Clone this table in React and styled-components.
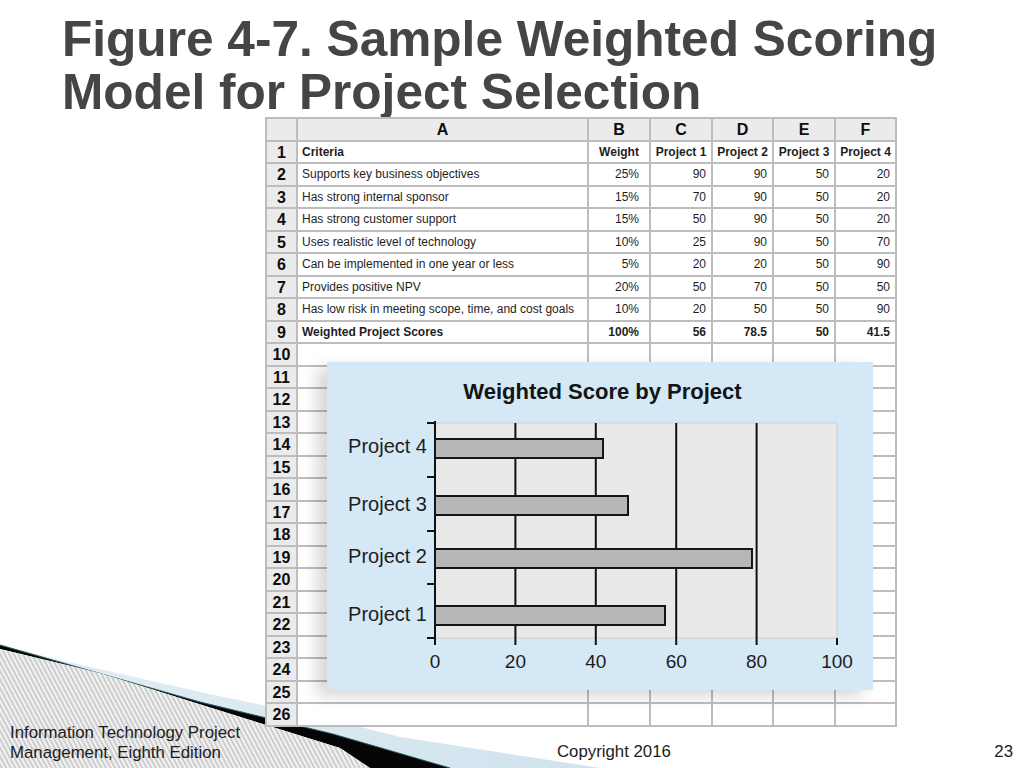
import React from "react";
import styled, { createGlobalStyle } from "styled-components";

const GlobalStyle = createGlobalStyle`
  html, body {
    margin: 0;
    padding: 0;
    background: #fff;
  }
  body {
    font-family: "Liberation Sans", Arial, sans-serif;
  }
`;

const Page = styled.div`
  position: relative;
  width: 1024px;
  height: 768px;
  overflow: hidden;
  background: #fff;
  display: grid;
  grid-template-columns: 265px 1fr;
  grid-template-rows: 117px 610px 1fr;
`;

const Deco = styled.svg`
  position: absolute;
  left: 0;
  bottom: 0;
  z-index: 0;
`;

const Title = styled.h1`
  grid-column: 1 / -1;
  grid-row: 1;
  position: relative;
  z-index: 1;
  margin: 0;
  padding: 13px 62px 0;
  font-size: 49.6px;
  line-height: 53px;
  font-weight: 700;
  color: #454545;
`;

const SheetArea = styled.div`
  grid-column: 2;
  grid-row: 2;
  position: relative;
  z-index: 2;
  align-self: start;
  justify-self: start;
`;

const Sheet = styled.div`
  display: grid;
  grid-template-columns: 29px 289px 60px 60px 59px 60px 59px;
  grid-auto-rows: 20.5px;
  gap: 2px;
  padding: 2px;
  background: #bdbdbd;
`;

const Cell = styled.div`
  background: #fff;
  color: #1e1e1e;
  font-size: 12px;
  line-height: 20.5px;
  font-weight: ${(p) => (p.$bold ? 700 : 400)};
  text-align: ${(p) => p.$align || "left"};
  padding: 0 ${(p) => (p.$right ?? 4)}px 0 ${(p) => (p.$left ?? 4)}px;
  white-space: nowrap;
  overflow: hidden;
`;

const HeadCell = styled.div`
  background: #ebebeb;
  color: #0e0e0e;
  font-size: 16px;
  font-weight: 700;
  line-height: 21px;
  text-align: center;
`;

const ChartPanel = styled.div`
  position: absolute;
  left: 62px;
  top: 245px;
  width: 546px;
  height: 328px;
  background: #d5e8f6;
  box-shadow: -10px 6px 14px rgba(0, 0, 0, 0.16);
  display: flex;
  flex-direction: column;
`;

const ChartTitle = styled.div`
  padding: 18px 0 0 5px;
  font-size: 22px;
  line-height: 24px;
  font-weight: 700;
  color: #141414;
  text-align: center;
`;

const LeftFooter = styled.div`
  grid-column: 1;
  grid-row: 2 / 4;
  align-self: end;
  position: relative;
  z-index: 1;
  padding: 0 0 5px 10px;
  font-size: 16.8px;
  line-height: 20px;
  color: #1c1c1c;
`;

const BottomBar = styled.div`
  grid-column: 2;
  grid-row: 3;
  position: relative;
  z-index: 1;
  display: flex;
  justify-content: space-between;
  align-items: flex-end;
  padding: 0 11px 6px 292px;
  font-size: 16.8px;
  line-height: 20px;
  color: #1c1c1c;
`;

const letters = ["A", "B", "C", "D", "E", "F"];

const criteria = [
  ["Supports key business objectives", "25%", 90, 90, 50, 20],
  ["Has strong internal sponsor", "15%", 70, 90, 50, 20],
  ["Has strong customer support", "15%", 50, 90, 50, 20],
  ["Uses realistic level of technology", "10%", 25, 90, 50, 70],
  ["Can be implemented in one year or less", "5%", 20, 20, 50, 90],
  ["Provides positive NPV", "20%", 50, 70, 50, 50],
  ["Has low risk in meeting scope, time, and cost goals", "10%", 20, 50, 50, 90],
];

const totals = ["Weighted Project Scores", "100%", 56, 78.5, 50, 41.5];

const DataRow = ({ n, values, bold }) => (
  <>
    <HeadCell>{n}</HeadCell>
    <Cell $bold={bold}>{values[0]}</Cell>
    <Cell $bold={bold} $align="right" $right={10}>
      {values[1]}
    </Cell>
    {values.slice(2).map((v, i) => (
      <Cell key={i} $bold={bold} $align="right" $right={5}>
        {v}
      </Cell>
    ))}
  </>
);

const EmptyRow = ({ n }) => (
  <>
    <HeadCell>{n}</HeadCell>
    {letters.map((l) => (
      <Cell key={l} />
    ))}
  </>
);

// chart coords are relative to the svg, which starts at (327, 404) on the page
const bars = [
  { label: "Project 4", top: 35, width: 168, base: 49 },
  { label: "Project 3", top: 92, width: 193, base: 107 },
  { label: "Project 2", top: 145, width: 317, base: 159 },
  { label: "Project 1", top: 202, width: 230, base: 217 },
];

const Chart = () => {
  const x0 = 108;
  const unit = 4.02;
  const top = 19;
  const bottom = 234;
  const ticksY = [19, 73, 127, 180, 234];
  return (
    <ChartPanel>
      <ChartTitle>Weighted Score by Project</ChartTitle>
      <svg width="546" height="286" viewBox="0 0 546 286">
        <rect x={x0} y={top} width={402} height={bottom - top} fill="#e9e9e9" stroke="#cfcfcf" strokeWidth="1" />
        {[20, 40, 60, 80].map((v) => (
          <line key={v} x1={x0 + v * unit} x2={x0 + v * unit} y1={top} y2={bottom + 7} stroke="#111" strokeWidth="2" />
        ))}
        <line x1={x0 + 100 * unit} x2={x0 + 100 * unit} y1={bottom} y2={bottom + 7} stroke="#111" strokeWidth="2" />
        <line x1={x0} x2={x0} y1={top - 2} y2={bottom + 7} stroke="#111" strokeWidth="2" />
        {ticksY.map((y) => (
          <line key={y} x1={x0 - 8} x2={x0} y1={y} y2={y} stroke="#111" strokeWidth="2" />
        ))}
        {bars.map((b) => (
          <g key={b.label}>
            <rect x={x0} y={b.top} width={b.width} height={19} fill="#b7b7b7" stroke="#151515" strokeWidth="2" />
            <text x={100} y={b.base} textAnchor="end" fontSize="20" fill="#1d1d1d" fontFamily="Liberation Sans, Arial, sans-serif">
              {b.label}
            </text>
          </g>
        ))}
        {[0, 20, 40, 60, 80, 100].map((v) => (
          <text key={v} x={x0 + v * unit} y={264} textAnchor="middle" fontSize="19" fill="#1d1d1d" fontFamily="Liberation Sans, Arial, sans-serif">
            {v}
          </text>
        ))}
      </svg>
    </ChartPanel>
  );
};

const Decoration = () => (
  <Deco width="620" height="130" viewBox="0 638 620 130">
    <defs>
      <pattern id="hatch" width="4" height="10" patternUnits="userSpaceOnUse" patternTransform="rotate(-28)">
        <rect width="4" height="10" fill="#f2f2f2" />
        <line x1="1" y1="0" x2="1" y2="10" stroke="#a9a9a9" strokeWidth="1" />
      </pattern>
      <linearGradient id="blueWedge" x1="0" y1="0" x2="1" y2="0">
        <stop offset="0" stopColor="#e3eef3" />
        <stop offset="1" stopColor="#cfe3ee" />
      </linearGradient>
    </defs>
    <polygon points="60,660 200,692 333,720 400,737 600,768 450,768 333,734 200,702 0,645" fill="url(#blueWedge)" />
    <polygon points="0,645 200,702 333,734 450,768 370,768 340,748 250,720 100,673 0,649" fill="#050505" />
    <polyline points="0,645 200,702 333,734 450,768" fill="none" stroke="#2a5a66" strokeWidth="1" />
    <polygon points="0,649 100,673 250,720 340,748 370,768 0,768" fill="url(#hatch)" />
  </Deco>
);

export default function App() {
  return (
    <>
      <GlobalStyle />
      <Page>
        <Decoration />
        <Title>Figure 4-7. Sample Weighted Scoring Model for Project Selection</Title>
        <SheetArea>
          <Sheet>
            <HeadCell />
            {letters.map((l) => (
              <HeadCell key={l}>{l}</HeadCell>
            ))}
            <HeadCell>1</HeadCell>
            <Cell $bold>Criteria</Cell>
            <Cell $bold $align="center" $left={0} $right={0}>
              Weight
            </Cell>
            {[1, 2, 3, 4].map((p) => (
              <Cell key={p} $bold $align="center" $left={0} $right={0}>
                Project {p}
              </Cell>
            ))}
            {criteria.map((r, i) => (
              <DataRow key={i} n={i + 2} values={r} />
            ))}
            <DataRow n={9} values={totals} bold />
            {Array.from({ length: 17 }, (_, i) => (
              <EmptyRow key={i} n={i + 10} />
            ))}
          </Sheet>
          <Chart />
        </SheetArea>
        <LeftFooter>
          Information Technology Project
          <br />
          Management, Eighth Edition
        </LeftFooter>
        <BottomBar>
          <span>Copyright 2016</span>
          <span>23</span>
        </BottomBar>
      </Page>
    </>
  );
}
